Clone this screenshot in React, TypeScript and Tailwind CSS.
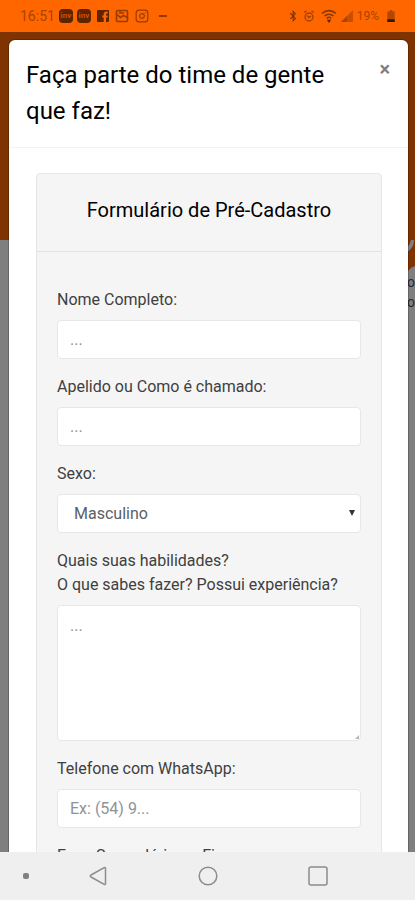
import { useState } from "react";
import { FaBluetoothB } from "react-icons/fa";
import { Image, Instagram } from "lucide-react";

const inputClass =
  "block w-full rounded border border-[#e4e8e9] bg-white px-3 text-base text-[#5a6066] placeholder:text-[#8d9398] outline-none focus:border-orange-400";

function StatusBar() {
  return (
    <header className="flex h-8 shrink-0 items-center justify-between bg-[#ff6600] px-5 text-[#a84300]">
      <div className="flex items-center gap-1">
        <span className="text-sm leading-4">16:51</span>
        <span className="flex h-3.5 w-3.5 items-center justify-center rounded-sm bg-[#5c2500] text-[8px] leading-none font-bold text-[#c9530a]">
          inv
        </span>
        <span className="flex h-3.5 w-3.5 items-center justify-center rounded-sm bg-[#5c2500] text-[8px] leading-none font-bold text-[#c9530a]">
          inv
        </span>
        {/* Facebook */}
        <svg viewBox="0 0 12 12" className="ml-0.5 h-3 w-3" aria-hidden="true">
          <path
            fill="#5c2500"
            d="M1 0h10a1 1 0 0 1 1 1v10a1 1 0 0 1-1 1H9V7.6h1.6V5.6H9V4.4c0-.7.3-1 1-1h.8V1.6H9.4C7.7 1.6 6.7 2.6 6.7 4.2V5.6H5.3V7.6h1.4V12H1a1 1 0 0 1-1-1V1a1 1 0 0 1 1-1z"
          />
        </svg>
        {/* Picture */}
        <svg viewBox="0 0 14 14" className="ml-0.5 h-3.5 w-3.5" fill="none" stroke="#963c00" strokeWidth="1.6" aria-hidden="true">
          <rect x="1.500" y="1.500" width="11" height="11" rx="1" />
          <path d="M2 5.500l3.500 3 3-2 4 2M5 2v2h4" />
        </svg>
        <Instagram size={14} strokeWidth={2} className="ml-0.5 text-[#963c00]" />
        <span className="ml-1.5 h-0.5 w-2 bg-[#963c00]" />
      </div>

      <div className="flex items-center gap-1">
        <FaBluetoothB size={12} className="text-[#7a3100]" />
        {/* Alarm */}
        <svg viewBox="0 0 12 12" className="mr-0.5 h-3 w-3" fill="none" stroke="#a84300" strokeWidth="1.4" aria-hidden="true">
          <circle cx="6" cy="7" r="4" />
          <path d="M1 2.5 3.5.8M11 2.5 8.5.8M4 5.500l2 2 2-1.500" />
        </svg>
        {/* Wi-Fi */}
        <svg viewBox="0 0 16 14" className="h-3.5 w-4" fill="none" stroke="#8a3700" strokeWidth="1.6" aria-hidden="true">
          <path d="M1 4.5a10 10 0 0 1 14 0M3.500 7a6.500 6.500 0 0 1 9 0M5.800 9.300a3.200 3.200 0 0 1 4.400 0" />
          <path fill="#5c2500" stroke="none" d="M8 14 5.800 10.800h4.400z" />
        </svg>
        {/* Signal */}
        <svg viewBox="0 0 12 12" className="h-3 w-3" aria-hidden="true">
          <path fill="#c84f00" d="M12 0v12H0z" />
          <path fill="#a84300" d="M6 6v6H0z" />
        </svg>
        <span className="text-xs leading-4">19%</span>
        {/* Battery */}
        <svg viewBox="0 0 8 13" className="ml-1 h-3 w-2" aria-hidden="true">
          <path fill="#b04800" d="M2.500 0h3v1.500H8V13H0V1.500h2.500z" />
          <path fill="#3c1800" d="M0 10h8v3H0z" />
        </svg>
      </div>
    </header>
  );
}

function Backdrop() {
  return (
    <div className="absolute inset-0 overflow-hidden bg-white" aria-hidden="true">
      <div className="h-52 bg-[#ff6600]" />
      <svg viewBox="0 0 20 32" className="ml-auto h-8 w-5">
        <path fill="#ff6600" d="M0 0h20v26q-4 1-7 5H0z" />
        <path fill="#fff" d="M19 0q0 8-7 12V7q3-2 4-7z" />
      </svg>
      <p className="text-right text-sm leading-5 text-gray-600">
        do
        <br />
        to
      </p>
      <div className="absolute inset-0 bg-black/50" />
    </div>
  );
}

function RegistrationForm() {
  const [gender, setGender] = useState("Masculino");

  return (
    <form className="flex flex-col gap-4 px-5 pt-9 pb-8 text-base text-[#404040]">
      <div className="flex flex-col gap-2">
        <label htmlFor="name">Nome Completo:</label>
        <input id="name" type="text" placeholder="..." className={`${inputClass} h-[39px]`} />
      </div>

      <div className="flex flex-col gap-2">
        <label htmlFor="nickname">Apelido ou Como é chamado:</label>
        <input id="nickname" type="text" placeholder="..." className={`${inputClass} h-[39px]`} />
      </div>

      <div className="flex flex-col gap-2">
        <label htmlFor="gender">Sexo:</label>
        <div className="relative">
          <select
            id="gender"
            value={gender}
            onChange={(e) => setGender(e.target.value)}
            className={`${inputClass} h-[39px] appearance-none pl-4`}
          >
            <option>Masculino</option>
            <option>Feminino</option>
          </select>
          <svg
            viewBox="0 0 6 6"
            className="pointer-events-none absolute top-4 right-1.5 h-1.5 w-1.5"
            aria-hidden="true"
          >
            <path fill="#333" d="M0 0h6L3 6z" />
          </svg>
        </div>
      </div>

      <div className="flex flex-col gap-2">
        <label htmlFor="skills">
          Quais suas habilidades?
          <br />O que sabes fazer? Possui experiência?
        </label>
        <div className="relative">
          <textarea
            id="skills"
            placeholder="..."
            className={`${inputClass} h-[136px] resize-none py-2`}
          />
          <svg
            viewBox="0 0 4 4"
            className="pointer-events-none absolute right-0.5 bottom-0.5 h-1 w-1"
            aria-hidden="true"
          >
            <path fill="#b5b5b5" d="M4 0v4H0z" />
          </svg>
        </div>
      </div>

      <div className="flex flex-col gap-2">
        <label htmlFor="whatsapp">Telefone com WhatsApp:</label>
        <input id="whatsapp" type="tel" placeholder="Ex: (54) 9..." className={`${inputClass} h-[39px]`} />
      </div>

      <div className="flex flex-col gap-2">
        <label htmlFor="phone">Fone Secundário ou Fixo:</label>
        <input id="phone" type="tel" placeholder="..." className={`${inputClass} h-[39px]`} />
      </div>
    </form>
  );
}

function NavigationBar() {
  return (
    <nav className="grid h-12 shrink-0 grid-cols-[43px_1fr_1fr_1fr_42px] items-center justify-items-center bg-[#efefef] text-[#8c8c8c]">
      <span className="mr-3.5 h-1.5 w-1.5 justify-self-end rounded-xs bg-[#808080]" />
      <button type="button" aria-label="Voltar">
        <svg viewBox="0 0 20 20" className="h-5 w-5" fill="none" stroke="currentColor" strokeWidth="1.5">
          <path strokeLinejoin="round" d="M17.500 2.500v15q0 1.500-1.300.8L3 11q-1.500-1 0-2L16.200 1.700q1.300-.7 1.300.8z" />
        </svg>
      </button>
      <button type="button" aria-label="Início">
        <svg viewBox="0 0 20 20" className="h-5 w-5" fill="none" stroke="currentColor" strokeWidth="1.5">
          <circle cx="10" cy="10" r="8.8" />
        </svg>
      </button>
      <button type="button" aria-label="Recentes">
        <svg viewBox="0 0 20 20" className="h-5 w-5" fill="none" stroke="currentColor" strokeWidth="1.5">
          <rect x="1" y="1" width="18" height="18" rx="2" />
        </svg>
      </button>
    </nav>
  );
}

export default function App() {
  return (
    <div className="flex h-screen flex-col overflow-hidden font-['Roboto',sans-serif]">
      <StatusBar />

      <main className="relative min-h-0 flex-1 overflow-hidden">
        <Backdrop />
        <div className="relative h-full overflow-hidden pt-2 pr-[7px] pl-[9px]">
          <section
            role="dialog"
            aria-labelledby="modal-title"
            className="rounded-md bg-white ring-1 ring-black/20"
          >
            <div className="flex items-start justify-between border-b border-[#f3f3f3] pt-[17px] pr-4 pb-[18px] pl-[17px]">
              <h1 id="modal-title" className="pr-8 text-2xl leading-9 text-black">
                Faça parte do time de gente que faz!
              </h1>
              <button
                type="button"
                aria-label="Fechar"
                className="pr-0.5 text-xl leading-6 font-bold text-[#7f7f7f]"
              >
                ×
              </button>
            </div>

            <div className="pt-[25px] pr-[26px] pb-6 pl-[27px]">
              <div className="rounded border border-[#e6e6e6] bg-[#f5f5f5]">
                <div className="border-b border-[#e2e2e2] px-5 pt-[22px] pb-[27px]">
                  <h2 className="text-center text-xl leading-7 text-black">
                    Formulário de Pré-Cadastro
                  </h2>
                </div>
                <RegistrationForm />
              </div>
            </div>
          </section>
        </div>
      </main>

      <NavigationBar />
    </div>
  );
}
